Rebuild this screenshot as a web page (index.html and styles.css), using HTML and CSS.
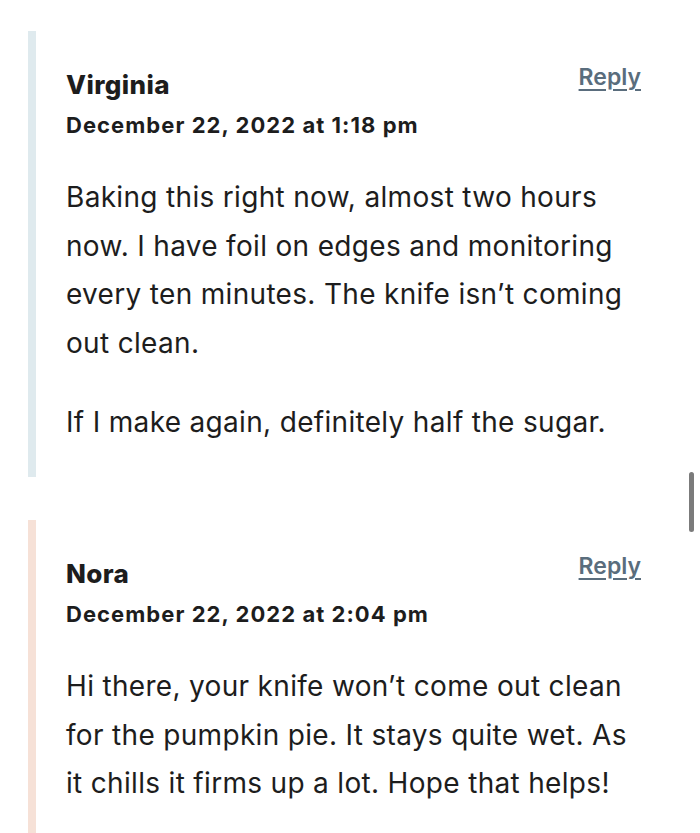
FILE: index.html
```html
<!DOCTYPE html>
<html lang="en">
<head>
<meta charset="utf-8">
<title>Comments</title>
<link rel="stylesheet" href="styles.css">
</head>
<body>
<div class="comments">
  <article class="comment comment--blue">
    <div class="comment-head">
      <div class="meta">
        <div class="author">Virginia</div>
        <div class="date">December 22, 2022 at 1:18 pm</div>
      </div>
      <a class="reply" href="#">Reply</a>
    </div>
    <div class="comment-body">
      <p>Baking this right now, almost two hours now. I have foil on edges and monitoring every ten minutes. The knife isn’t coming out clean.</p>
      <p>If I make again, definitely half the sugar.</p>
    </div>
  </article>
  <article class="comment comment--peach">
    <div class="comment-head">
      <div class="meta">
        <div class="author">Nora</div>
        <div class="date">December 22, 2022 at 2:04 pm</div>
      </div>
      <a class="reply" href="#">Reply</a>
    </div>
    <div class="comment-body">
      <p>Hi there, your knife won’t come out clean for the pumpkin pie. It stays quite wet. As it chills it firms up a lot. Hope that helps!</p>
    </div>
  </article>
</div>
<div class="scrollbar"></div>
</body>
</html>
```
FILE: styles.css
```css
html, body {
  margin: 0;
  padding: 0;
  background: #ffffff;
  overflow: hidden;
}
body {
  font-family: Inter, "Noto Sans", sans-serif;
  color: #1d1d1d;
  height: 833px;
}
.comments {
  padding: 31px 59px 0 28px;
  display: flex;
  flex-direction: column;
  gap: 43px;
}
.comment {
  padding: 38px 0 30px 30px;
  border-left: 8px solid #dfeaee;
}
.comment--peach {
  border-left-color: #f6e1d7;
  padding-bottom: 60px;
}
.comment-head {
  display: flex;
  justify-content: space-between;
  align-items: flex-start;
}
.author {
  font-size: 26px;
  font-weight: 800;
  line-height: 32px;
  letter-spacing: 0.4px;
}
.date {
  margin-top: 10px;
  font-size: 22px;
  font-weight: 700;
  line-height: 28px;
  letter-spacing: 1.05px;
}
.reply {
  margin-top: -6px;
  font-size: 23px;
  font-weight: 600;
  line-height: 28px;
  color: #5a6d7d;
  text-decoration: underline;
  text-underline-offset: 4px;
  text-decoration-thickness: 2px;
}
.comment-body {
  margin-top: 34px;
}
.comment-body p {
  margin: 0 0 31px;
  font-size: 28px;
  line-height: 48.6px;
  font-weight: 400;
  letter-spacing: 0.32px;
}
.comment-body p:last-child {
  margin-bottom: 0;
}
.scrollbar {
  position: fixed;
  left: 689px;
  top: 472px;
  width: 5px;
  height: 60px;
  border-radius: 3px;
  background: #7b7b7b;
}
```
